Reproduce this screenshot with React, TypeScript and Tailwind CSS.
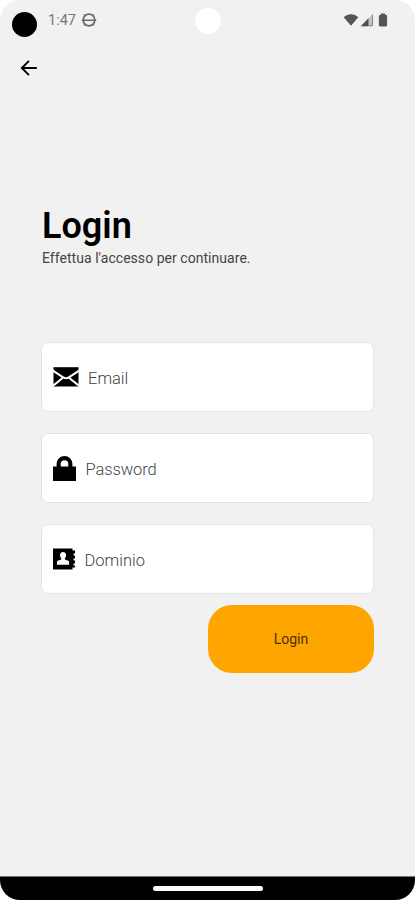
import type { ReactNode } from "react";

function StatusBar() {
  return (
    <div className="flex h-[41px] items-start justify-between pl-3 pr-[27px]">
      <div className="flex">
        <span className="mt-[11.5px] h-[25px] w-[25px] rounded-full bg-black" />
        <span className="ml-[11px] mt-[11px] text-[14.5px] leading-5 text-[#777]">1:47</span>
        <svg viewBox="0 0 16 16" className="ml-[5px] mt-[12px] h-4 w-4" fill="none" stroke="#6b6b6b">
          <circle cx="8" cy="8" r="5.8" strokeWidth="1.8" />
          <path d="M.8 8.3h14.4M3 2.6l1 1M13 2.6l-1 1M3 13.4l1-1M13 13.4l-1-1" strokeWidth="1.4" />
        </svg>
      </div>
      <div className="mt-[13px] flex items-center">
        <svg viewBox="0 0 16 14" className="h-[14px] w-4" fill="#555">
          <path d="M.7 4.2C4.8.1 11.2.1 15.3 4.2L8 12.8z" />
        </svg>
        <svg viewBox="0 0 14 14" className="ml-[1px] h-[14px] w-[14px]">
          <path d="M13 .8v12.4H.8z" fill="#c4c4c4" />
          <path d="M8.5 5.2v8H.8z" fill="#505050" />
          <path d="M12.5 2v10.7H9" fill="none" stroke="#888" />
        </svg>
        <svg viewBox="0 0 10 14" className="ml-[4px] h-[14px] w-[10px]" fill="#555">
          <path d="M3 .5h4v1.3h1.2l.9.9v9.8l-.9.9H1.8l-.9-.9V2.7l.9-.9H3z" />
        </svg>
      </div>
    </div>
  );
}

function MailIcon() {
  return (
    <svg viewBox="0 0 26 20" className="h-5 w-[26px]">
      <path d="M.5.2h25v19.3H.5z" />
      <path
        d="M-.5 3.4 10.2 10.3q2.8 1.8 5.6 0L26.5 3.4M.2 18.6 9.6 11M25.8 18.6 16.4 11"
        fill="none"
        stroke="#fff"
        strokeWidth="2"
      />
    </svg>
  );
}

function LockIcon() {
  return (
    <svg viewBox="0 0 23 25" className="h-[25px] w-[23px]">
      <path d="M0 10.6h3.6V8a7.9 8 0 0 1 15.8 0v2.6H23V25H0zM7.7 10.6h7.6V8a3.8 3.8 0 0 0-7.6 0z" />
    </svg>
  );
}

function ContactsIcon() {
  return (
    <svg viewBox="0 0 22 22" className="h-[22px] w-[22px]">
      <path d="M0 .5h19.5v2H22v3h-1.5v2H22v3h-1.5v2H22v3h-1.5v2H22v2h-2.5v2H0z" />
      <path
        d="M10 4.1c2 0 3.1 1.4 3.1 3.2 0 1.4-.6 2.4-1.2 3v1.3l3.4 1.1c.6.3.8.8.8 1.5v2.5H4v-2.5c0-.7.2-1.2.8-1.5l3.4-1.1v-1.3c-.6-.6-1.2-1.6-1.2-3 0-1.8 1-3.2 3-3.2z"
        fill="#fff"
      />
    </svg>
  );
}

function Field({ icon, label, labelClass }: { icon: ReactNode; label: string; labelClass: string }) {
  return (
    <label className="flex h-[70px] items-center rounded-[7px] border border-[#e4e4e4] bg-white pl-[11px]">
      {icon}
      <input
        placeholder={label}
        className={`min-w-0 flex-1 bg-transparent pt-[4px] text-[16.5px] font-light outline-none placeholder:text-[#444] ${labelClass}`}
      />
    </label>
  );
}

export default function App() {
  return (
    <div className="h-[900px] w-[415px] bg-white font-['Roboto',sans-serif]">
      <div className="relative flex h-full flex-col overflow-hidden rounded-[20px] bg-[#f1f1f1]">
        <StatusBar />
        <span className="absolute left-[195px] top-2 h-[26px] w-[26px] rounded-full bg-white" />

        <button className="ml-5 mt-[18px] h-[18px] w-[18px]" aria-label="Indietro">
          <svg viewBox="0 0 18 18" fill="none" stroke="#000" strokeWidth="1.9">
            <path d="M16.8 9H2M9 1.8 1.8 9 9 16.2" />
          </svg>
        </button>

        <main className="flex flex-1 flex-col pl-[41px] pr-[41px] pt-[128px]">
          <h1 className="pl-px text-[36px] font-semibold leading-[42px]">Login</h1>
          <p className="mt-px pl-px text-sm leading-5 tracking-[0.04px] text-[#444]">
            Effettua l'accesso per continuare.
          </p>

          <form className="mt-[74px] flex flex-col gap-[21px]">
            <Field icon={<MailIcon />} label="Email" labelClass="ml-[9px]" />
            <Field icon={<LockIcon />} label="Password" labelClass="ml-[9.5px] tracking-[-0.1px]" />
            <Field icon={<ContactsIcon />} label="Dominio" labelClass="ml-[9.5px]" />
          </form>

          <button className="mt-[11px] h-[68px] w-[166px] self-end rounded-[24px] bg-[#ffa500] text-sm text-[#4a3000]">
            Login
          </button>
        </main>

        <footer className="flex h-[24px] items-center justify-center border-t border-[#777] bg-black">
          <span className="h-[5px] w-[110px] rounded-full bg-white" />
        </footer>
      </div>
    </div>
  );
}
